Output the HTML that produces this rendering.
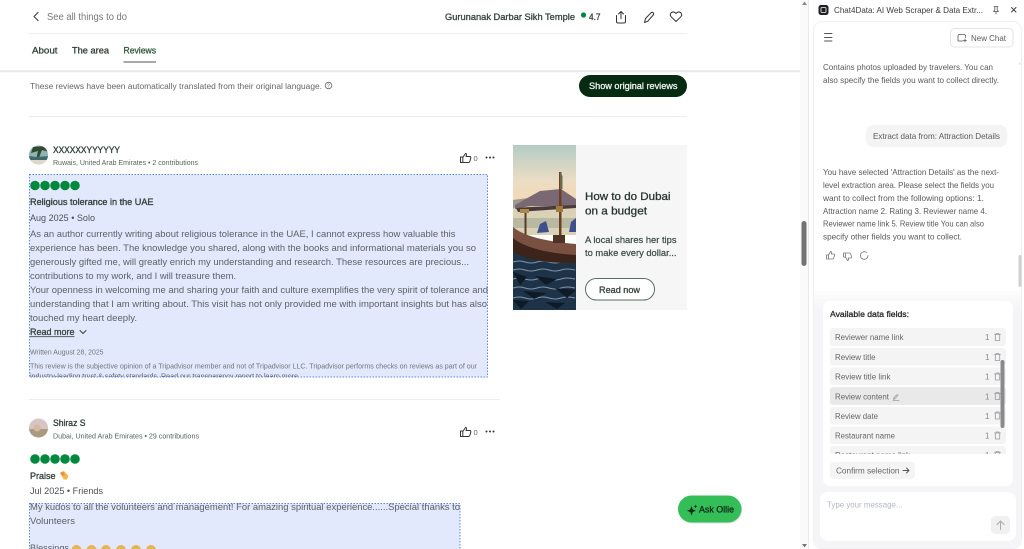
<!DOCTYPE html>
<html lang="en">
<head>
<meta charset="utf-8">
<title>Gurunanak Darbar Sikh Temple</title>
<style>
html,body{margin:0;padding:0;width:1024px;height:549px;overflow:hidden;background:#fff}
svg{display:block;position:absolute;left:0;top:0;filter:blur(.38px)}
text{font-family:"Liberation Sans",sans-serif;white-space:pre}
.b{font-weight:400;stroke:#36443c;stroke-width:.32}
.w{font-weight:400;stroke:#eef2ee;stroke-width:.3}
.body{font-size:9.5px;fill:#5c6068}
.chat{font-size:8.5px;fill:#5a5a5e}
.row{font-size:8px;fill:#66666a}
.ic{fill:none;stroke:#333;stroke-width:1;stroke-linecap:round;stroke-linejoin:round}
.ig{fill:none;stroke:#9a9a9e;stroke-width:.8;stroke-linecap:round;stroke-linejoin:round}
</style>
</head>
<body>
<svg width="1024" height="549" viewBox="0 0 1024 549" xmlns="http://www.w3.org/2000/svg">
<defs>
<linearGradient id="sky" x1="0" y1="0" x2="0" y2="1">
<stop offset="0" stop-color="#b4ccc6"/><stop offset=".5" stop-color="#ecdcc4"/><stop offset="1" stop-color="#f8d6a8"/>
</linearGradient>
<linearGradient id="fade" x1="0" y1="0" x2="0" y2="1">
<stop offset="0" stop-color="#fff"/><stop offset="1" stop-color="#f5f5f8"/>
</linearGradient>
<clipPath id="c1"><rect x="0" y="0" width="1024" height="377"/></clipPath>
<clipPath id="c2"><rect x="825" y="320" width="185" height="134"/></clipPath>
<clipPath id="c3"><rect x="513" y="145" width="63" height="165"/></clipPath>
<clipPath id="a1"><circle cx="38.5" cy="155" r="9.5"/></clipPath>
<clipPath id="a2"><circle cx="38.5" cy="428" r="9.5"/></clipPath>
</defs>

<!-- top bar -->
<path class="ic" style="stroke:#444;stroke-width:1.2" d="M38 12.5L34 16.5L38 20.5"/>
<text x="47" y="20" font-size="10" fill="#777" textLength="80" lengthAdjust="spacingAndGlyphs">See all things to do</text>
<text x="445" y="20" font-size="9.5" class="b" fill="#3a4a42" textLength="130" lengthAdjust="spacingAndGlyphs">Gurunanak Darbar Sikh Temple</text>
<circle cx="583.5" cy="15" r="2.6" fill="#00893c"/>
<text x="589" y="20" font-size="9.5" class="b" fill="#3a4a42" textLength="11.5" lengthAdjust="spacingAndGlyphs">4.7</text>
<path class="ic" d="M616.5 15.5V21.5Q616.5 23 618 23H624Q625.5 23 625.5 21.5V15.5M621 18.5V11.5M618.5 14L621 11.5L623.5 14"/>
<path class="ic" d="M644.5 22.5L645.5 18.5L651 12.8Q652.2 11.8 653.2 12.8Q654.2 13.8 653.2 15L647.7 21.3Z"/>
<path class="ic" d="M676 21.5L671.2 16.8Q669.5 14.8 671 12.9Q673 11 675.2 12.8L676 13.5L676.8 12.8Q679 11 681 12.9Q682.5 14.8 680.8 16.8Z"/>
<line x1="29" y1="33.5" x2="687" y2="33.5" stroke="#f0f0f0"/>

<!-- tabs -->
<text x="32" y="53.5" font-size="9.5" class="b" fill="#2f4034" textLength="25.5" lengthAdjust="spacingAndGlyphs">About</text>
<text x="72" y="53.5" font-size="9.5" class="b" fill="#2f4034" textLength="37" lengthAdjust="spacingAndGlyphs">The area</text>
<text x="123.5" y="53.5" font-size="9.5" class="b" fill="#2f5a3c" style="stroke:#2f5a3c" textLength="32.5" lengthAdjust="spacingAndGlyphs">Reviews</text>
<rect x="123.5" y="61.5" width="32.5" height="1" fill="#555"/>
<rect x="0" y="70.5" width="800" height="1" fill="#dcdcdc"/>
<rect x="0" y="71.5" width="800" height="1" fill="#f3f3f3"/>

<text x="30" y="89" font-size="8.7" fill="#666" textLength="292" lengthAdjust="spacingAndGlyphs">These reviews have been automatically translated from their original language.</text>
<circle cx="328.5" cy="85.5" r="3.3" fill="none" stroke="#666" stroke-width=".8"/>
<text x="326.9" y="87.5" font-size="5.5" fill="#666">?</text>
<rect x="579" y="75" width="108" height="22" rx="11" fill="#062b12"/>
<text x="589" y="89" font-size="9" class="w" fill="#eef2ee" textLength="88.5" lengthAdjust="spacingAndGlyphs">Show original reviews</text>
<line x1="29" y1="116.5" x2="687" y2="116.5" stroke="#eee"/>

<!-- review 1 header -->
<g clip-path="url(#a1)">
<rect x="29" y="145" width="20" height="20" fill="#8fb2b8"/>
<path d="M33 147L46 146L49 152L42 150L38 160L36 160L38 151L31 153Z" fill="#2f4a2c"/>
<path d="M29 156L36 157L49 156V160H29Z" fill="#3f6a6a"/>
<rect x="29" y="160" width="20" height="5" fill="#ded8cc"/>
</g>
<text x="53" y="153" font-size="9" class="b" fill="#2a3530" textLength="67" lengthAdjust="spacingAndGlyphs">XXXXXXYYYYYY</text>
<text x="53" y="165" font-size="7.2" fill="#55665c" textLength="145" lengthAdjust="spacingAndGlyphs">Ruwais, United Arab Emirates • 2 contributions</text>
<path class="ic" d="M460.5 157H462.8V162.5H460.5ZM462.8 157.5L465.5 153.5Q466.8 153.5 466.5 155L466 156.5H470Q471 156.8 470.8 158L469.8 161.5Q469.5 162.5 468.500 162.5H462.8"/>
<text x="473.5" y="161" font-size="7.5" fill="#666">0</text>
<circle cx="486.5" cy="157.5" r="1" fill="#333"/><circle cx="490" cy="157.5" r="1" fill="#333"/><circle cx="493.5" cy="157.5" r="1" fill="#333"/>

<!-- selection 1 -->
<rect x="29.5" y="174.5" width="458" height="202.5" fill="#e3e9fc" stroke="#5b87e8" stroke-width="1" stroke-dasharray="1.5 1.5"/>
<g fill="#00893c"><circle cx="35" cy="185.5" r="4.8"/><circle cx="45" cy="185.500" r="4.8"/><circle cx="55" cy="185.5" r="4.8"/><circle cx="65" cy="185.5" r="4.8"/><circle cx="75" cy="185.5" r="4.8"/></g>
<text x="30" y="205" font-size="9" class="b" fill="#303a3a" textLength="123.5" lengthAdjust="spacingAndGlyphs">Religious tolerance in the UAE</text>
<text x="30" y="221" font-size="9.5" fill="#4c5158" textLength="65" lengthAdjust="spacingAndGlyphs">Aug 2025 • Solo</text>
<text class="body" x="30" y="237" textLength="425.5" lengthAdjust="spacingAndGlyphs">As an author currently writing about religious tolerance in the UAE, I cannot express how valuable this</text>
<text class="body" x="30" y="251" textLength="446" lengthAdjust="spacingAndGlyphs">experience has been. The knowledge you shared, along with the books and informational materials you so</text>
<text class="body" x="30" y="265" textLength="439" lengthAdjust="spacingAndGlyphs">generously gifted me, will greatly enrich my understanding and research. These resources are precious...</text>
<text class="body" x="30" y="279" textLength="206" lengthAdjust="spacingAndGlyphs">contributions to my work, and I will treasure them.</text>
<text class="body" x="30" y="293" textLength="458" lengthAdjust="spacingAndGlyphs">Your openness in welcoming me and sharing your faith and culture exemplifies the very spirit of tolerance and</text>
<text class="body" x="30" y="307" textLength="457" lengthAdjust="spacingAndGlyphs">understanding that I am writing about. This visit has not only provided me with important insights but has also</text>
<text class="body" x="30" y="321" textLength="107" lengthAdjust="spacingAndGlyphs">touched my heart deeply.</text>
<text x="30" y="335" font-size="9.5" class="b" fill="#33403a" textLength="44.5" lengthAdjust="spacingAndGlyphs">Read more</text>
<rect x="30" y="336.3" width="44.5" height=".8" fill="#33403a"/>
<path class="ic" style="stroke:#33403a" d="M80 330.500L83 333.500L86 330.500"/>
<text x="30" y="354.5" font-size="7.2" fill="#70747c" textLength="73.5" lengthAdjust="spacingAndGlyphs">Written August 28, 2025</text>
<text x="30" y="368.5" font-size="7.2" fill="#70747c" textLength="447" lengthAdjust="spacingAndGlyphs">This review is the subjective opinion of a Tripadvisor member and not of Tripadvisor LLC. Tripadvisor performs checks on reviews as part of our</text>
<g clip-path="url(#c1)">
<text x="30" y="378.5" font-size="7.2" fill="#60646c" textLength="270" lengthAdjust="spacingAndGlyphs">industry-leading trust &amp; safety standards. Read our transparency report to learn more.</text>
</g>
<line x1="29" y1="399.5" x2="500" y2="399.5" stroke="#eee"/>

<!-- ad -->
<rect x="576" y="145" width="111" height="165" fill="#f6f6f6"/>
<g clip-path="url(#c3)">
<rect x="513" y="145" width="63" height="72" fill="url(#sky)"/>
<rect x="513" y="205" width="63" height="30" fill="#d9d2b6"/>
<rect x="513" y="218" width="63" height="10" fill="#b9b8a0"/>
<path d="M513 200L528 198L540 205L513 208Z" fill="#9a9a8c"/>
<rect x="513" y="250" width="63" height="60" fill="#1e3348"/>
<path d="M513 262q6 -2 12 0t12 0t12 0t12 0t14 0M513 270q6 -2 12 0t12 0t12 0t12 0t14 0M513 279q6 -2 12 0t12 0t12 0t12 0t14 0M513 288q6 -2 12 0t12 0t12 0t12 0t14 0M513 298q6 -2 12 0t12 0t12 0t12 0t14 0" stroke="#7f97ad" stroke-width="1" fill="none"/>
<path d="M513 272l14 5l-7 8zM535 276l22 3l-11 6zM523 291l24 2l-13 6zM555 288l21 2l-9 8zM513 300l16 1l-8 8zM545 302l20 1l-8 6z" fill="#0e1a26"/>
<path d="M515 205L540 191L561 189L576 199V206L530 206L515 209Z" fill="#7a6872"/>
<path d="M516 208L530 207L576 205V208L518 212Z" fill="#4a3a3a"/>
<rect x="524.5" y="209" width="2" height="27" fill="#5a3d28"/>
<rect x="559" y="172" width="2.5" height="72" fill="#6a3f26"/>
<path d="M560 172L562.500 176V189L560 189Z" fill="#6b6a4a"/>
<rect x="520" y="209" width="9" height="4" fill="#a98a48"/>
<rect x="556" y="206" width="7" height="6" fill="#a07a3a"/>
<path d="M540 224L546 221L549 232L537 233Z" fill="#3f4f8e"/>
<path d="M571 222L576 218V232L569 232Z" fill="#3f4f8e"/>
<path d="M513 227Q528 240 576 244V258Q535 256 513 241Z" fill="#7a5140"/>
<path d="M513 238Q530 252 576 255V263Q535 264 513 252Z" fill="#3d241a"/>
<rect x="553" y="235" width="12" height="8" fill="#4e3224"/>
</g>
<text x="585" y="200" font-size="11" class="b" fill="#1f2f28" textLength="85.5" lengthAdjust="spacingAndGlyphs">How to do Dubai</text>
<text x="585" y="214.5" font-size="11" class="b" fill="#1f2f28" textLength="62" lengthAdjust="spacingAndGlyphs">on a budget</text>
<text x="585" y="243" font-size="9" fill="#3a4a42" style="stroke:#3a4a42;stroke-width:.2" textLength="91.5" lengthAdjust="spacingAndGlyphs">A local shares her tips</text>
<text x="585" y="256" font-size="9" fill="#3a4a42" style="stroke:#3a4a42;stroke-width:.2" textLength="91.5" lengthAdjust="spacingAndGlyphs">to make every dollar...</text>
<rect x="585.5" y="278.5" width="69" height="21.5" rx="10.7" fill="#fff" stroke="#5a6b60"/>
<text x="599" y="293" font-size="9" class="b" fill="#3a4a42" textLength="41" lengthAdjust="spacingAndGlyphs">Read now</text>

<!-- review 2 -->
<g clip-path="url(#a2)">
<rect x="29" y="418" width="20" height="20" fill="#d8c4c4"/>
<rect x="29" y="429" width="20" height="9" fill="#a99a80"/>
<circle cx="37" cy="428" r="3.500" fill="#d9b8a0"/>
</g>
<text x="53" y="426" font-size="9" class="b" fill="#303a36" textLength="32.5" lengthAdjust="spacingAndGlyphs">Shiraz S</text>
<text x="53" y="438.5" font-size="7.2" fill="#55665c" textLength="146" lengthAdjust="spacingAndGlyphs">Dubai, United Arab Emirates • 29 contributions</text>
<path class="ic" d="M460.500 431H462.8V436.5H460.5ZM462.8 431.5L465.5 427.5Q466.8 427.5 466.5 429L466 430.5H470Q471 430.8 470.8 432L469.8 435.5Q469.5 436.5 468.5 436.5H462.8"/>
<text x="473.5" y="435" font-size="7.5" fill="#666">0</text>
<circle cx="486.5" cy="431.5" r="1" fill="#333"/><circle cx="490" cy="431.5" r="1" fill="#333"/><circle cx="493.5" cy="431.5" r="1" fill="#333"/>
<g fill="#00893c"><circle cx="35" cy="459" r="4.8"/><circle cx="45" cy="459" r="4.8"/><circle cx="55" cy="459" r="4.8"/><circle cx="65" cy="459" r="4.8"/><circle cx="75" cy="459" r="4.8"/></g>
<text x="30" y="479" font-size="9" class="b" fill="#303a36" textLength="25.5" lengthAdjust="spacingAndGlyphs">Praise</text>
<path d="M60.5 472.5L64 471L68.5 476L67 479.5L63.5 479.5Z" fill="#f2b84e"/>
<path d="M60 473L63 471.5L65 475L62 476Z" fill="#ee8a3c"/>
<text x="30" y="494" font-size="9.5" fill="#4c5158" textLength="73" lengthAdjust="spacingAndGlyphs">Jul 2025 • Friends</text>
<rect x="29.5" y="503.5" width="430.5" height="50" fill="#e3e9fc" stroke="#5b87e8" stroke-width="1" stroke-dasharray="1.5 1.5"/>
<text class="body" x="30" y="510" textLength="430" lengthAdjust="spacingAndGlyphs">My kudos to all the volunteers and management! For amazing spiritual experience......Special thanks to</text>
<text class="body" x="30" y="524" textLength="45" lengthAdjust="spacingAndGlyphs">Volunteers</text>
<text class="body" x="30" y="551" textLength="39" lengthAdjust="spacingAndGlyphs">Blessings</text>
<g fill="#e8b452"><circle cx="76.5" cy="550" r="5"/><circle cx="91.5" cy="550" r="5"/><circle cx="106" cy="550" r="5"/><circle cx="121" cy="550" r="5"/><circle cx="136" cy="550" r="5"/><circle cx="151" cy="550" r="5"/></g>

<!-- Ask Ollie -->
<rect x="678.5" y="496.5" width="63.5" height="27" rx="13.5" fill="#000" opacity=".12"/>
<rect x="678" y="495.5" width="63.5" height="27" rx="13.5" fill="#34be58"/>
<path d="M691.5 506L692.8 509.5L696 510.8L692.8 512L691.5 515.5L690.2 512L687 510.8L690.2 509.5ZM695.5 504.5L696 506L697.5 506.5L696 507L695.5 508.5L695 507L693.5 506.5L695 506Z" fill="#0c2a18"/>
<text x="699" y="512.5" font-size="9.5" fill="#0c2a18" style="stroke:#0c2a18;stroke-width:.3" textLength="35" lengthAdjust="spacingAndGlyphs">Ask Ollie</text>

<!-- page scrollbar -->
<rect x="800" y="0" width="9" height="549" fill="#fafafa"/>
<path d="M804.5 1.5L807 5H802Z" fill="#888"/>
<path d="M804.5 547.5L807 544H802Z" fill="#777"/>
<rect x="801.5" y="221" width="5" height="45" rx="2.5" fill="#747474"/>
<line x1="808.5" y1="0" x2="808.5" y2="549" stroke="#eaeaea"/>

<!-- side panel header -->
<rect x="809" y="0" width="215" height="549" fill="#fff"/>
<rect x="818.5" y="5" width="10" height="10" rx="2.5" fill="#1e1e22"/>
<rect x="821" y="7.5" width="5" height="5" rx="1" fill="none" stroke="#fff" stroke-width=".8"/>
<text x="834" y="13" font-size="8.7" fill="#3c3c40" textLength="149" lengthAdjust="spacingAndGlyphs">Chat4Data: AI Web Scraper &amp; Data Extr...</text>
<path class="ig" style="stroke:#555" d="M994 6.5H998M994.8 6.5V10L993.5 11.5H998.5L997.2 10V6.5M996 11.5V14"/>
<path class="ig" style="stroke:#444;stroke-width:1" d="M1011.5 7.5L1016 12M1016 7.5L1011.5 12"/>

<!-- side panel card -->
<rect x="813.5" y="21.5" width="208" height="527" rx="9" fill="#fff" stroke="#f0f0f2"/>
<path class="ig" style="stroke:#555;stroke-width:.9" d="M824.5 33.5H832M824.5 37.5H832M824.5 41H832"/>
<rect x="950.5" y="28.5" width="62.5" height="18.5" rx="4" fill="#fff" stroke="#e4e4e6"/>
<path class="ig" style="stroke:#555" d="M958 41V36Q958 34.5 959.5 34.5H964Q965.5 34.5 965.5 36V37.5M958 41H963M965 39V42M963.5 40.5H966.5"/>
<text x="971" y="40.8" font-size="8.5" fill="#5a5a5e" textLength="35" lengthAdjust="spacingAndGlyphs">New Chat</text>

<text class="chat" x="823" y="70" textLength="170" lengthAdjust="spacingAndGlyphs">Contains photos uploaded by travelers. You can</text>
<text class="chat" x="823" y="83" textLength="176" lengthAdjust="spacingAndGlyphs">also specify the fields you want to collect directly.</text>

<rect x="866" y="125" width="141" height="22" rx="7" fill="#f4f4f5"/>
<text class="chat" x="873" y="139" textLength="127" lengthAdjust="spacingAndGlyphs">Extract data from: Attraction Details</text>

<text class="chat" x="823" y="175" textLength="176" lengthAdjust="spacingAndGlyphs">You have selected 'Attraction Details' as the next-</text>
<text class="chat" x="823" y="188" textLength="171" lengthAdjust="spacingAndGlyphs">level extraction area. Please select the fields you</text>
<text class="chat" x="823" y="201" textLength="161" lengthAdjust="spacingAndGlyphs">want to collect from the following options: 1.</text>
<text class="chat" x="823" y="214" textLength="164" lengthAdjust="spacingAndGlyphs">Attraction name 2. Rating 3. Reviewer name 4.</text>
<text class="chat" x="823" y="226.5" textLength="161" lengthAdjust="spacingAndGlyphs">Reviewer name link 5. Review title You can also</text>
<text class="chat" x="823" y="239.5" textLength="139" lengthAdjust="spacingAndGlyphs">specify other fields you want to collect.</text>

<path class="ig" style="stroke:#777" d="M826.5 255H828.5V259H826.5ZM828.5 255L830.5 251.5Q831.8 251.5 831.5 253L831.2 254H834Q834.8 254.3 834.5 255.3L833.7 258Q833.4 259 832.5 259H828.5"/>
<path class="ig" style="stroke:#777" d="M843.5 253H845.5V257H843.5ZM845.5 257L847.5 260.5Q848.8 260.5 848.5 259L848.2 258H851Q851.8 257.7 851.5 256.7L850.7 254Q850.4 253 849.5 253H845.5"/>
<path class="ig" style="stroke:#777" d="M868 255.5A3.8 3.8 0 1 1 866.5 252.500"/>

<rect x="1018.5" y="255" width="3" height="32" rx="1.5" fill="#d0d0d2"/>
<path d="M1019.8 62L1021.3 64.5H1018.3Z" fill="#e2e2e2"/>
<path d="M1019.8 292L1021.3 289.5H1018.3Z" fill="#e2e2e2"/>

<!-- lower area -->
<rect x="814" y="288" width="207" height="20" fill="url(#fade)"/>
<path d="M814 308H1021V539Q1021 548 1012 548H823Q814 548 814 539Z" fill="#f5f5f8"/>
<rect x="823" y="301" width="190" height="185" rx="7" fill="#fff"/>

<text x="830" y="317" font-size="8.7" fill="#2a2a2e" style="stroke:#2a2a2e;stroke-width:.3" textLength="79" lengthAdjust="spacingAndGlyphs">Available data fields:</text>

<g clip-path="url(#c2)">
<g fill="#f4f4f5">
<rect x="830" y="328" width="176" height="18" rx="3"/>
<rect x="830" y="348" width="176" height="17.5" rx="3"/>
<rect x="830" y="367.5" width="176" height="17.5" rx="3"/>
<rect x="830" y="387" width="176" height="18" fill="#e9e9ea" rx="3"/>
<rect x="830" y="407" width="176" height="17.5" rx="3"/>
<rect x="830" y="426.5" width="176" height="17.5" rx="3"/>
<rect x="830" y="446" width="176" height="18" rx="3"/>
</g>
<text class="row" x="835" y="340" textLength="68.5" lengthAdjust="spacingAndGlyphs">Reviewer name link</text>
<text class="row" x="835" y="360" textLength="40.5" lengthAdjust="spacingAndGlyphs">Review title</text>
<text class="row" x="835" y="379.5" textLength="55.5" lengthAdjust="spacingAndGlyphs">Review title link</text>
<text class="row" x="835" y="399.5" textLength="54" lengthAdjust="spacingAndGlyphs">Review content</text>
<path class="ig" d="M893.5 399.5L894 397.5L897 394.5L898 395.5L895 398.5ZM893 400.5H899"/>
<text class="row" x="835" y="419" textLength="43" lengthAdjust="spacingAndGlyphs">Review date</text>
<text class="row" x="835" y="438.5" textLength="60" lengthAdjust="spacingAndGlyphs">Restaurant name</text>
<text class="row" x="835" y="458" textLength="75" lengthAdjust="spacingAndGlyphs">Restaurant name link</text>
<g font-size="8" fill="#88888c">
<text x="985" y="340">1</text><text x="985" y="360">1</text><text x="985" y="379.5">1</text><text x="985" y="399.5">1</text><text x="985" y="419">1</text><text x="985" y="438.5">1</text><text x="985" y="458">1</text>
</g>
<path class="ig" d="M994.5 334.5H1000.5M996 334.5V333.5H999V334.5M995.3 334.5V340.5H999.7V334.5"/>
<path class="ig" d="M994.5 354.5H1000.5M996 354.5V353.5H999V354.5M995.3 354.5V360.5H999.7V354.5"/>
<path class="ig" d="M994.5 374H1000.5M996 374V373H999V374M995.3 374V380H999.7V374"/>
<path class="ig" d="M994.5 393.5H1000.5M996 393.5V392.5H999V393.5M995.3 393.5V399.5H999.7V393.5"/>
<path class="ig" d="M994.5 413H1000.5M996 413V412H999V413M995.3 413V419H999.7V413"/>
<path class="ig" d="M994.5 433H1000.5M996 433V432H999V433M995.3 433V439H999.7V433"/>
<path class="ig" d="M994.5 452.5H1000.5M996 452.5V451.5H999V452.5M995.3 452.5V458.5H999.7V452.5"/>
</g>
<rect x="1000.5" y="360" width="4" height="68" rx="2" fill="#8a8a8c"/>

<rect x="830" y="462" width="85" height="17" rx="4" fill="#f4f4f5"/>
<text class="row" x="836" y="473.5" textLength="63.5" lengthAdjust="spacingAndGlyphs">Confirm selection</text>
<path class="ig" style="stroke:#555;stroke-width:.9" d="M903 470.5H909M906.5 468L909 470.5L906.5 473"/>

<rect x="820" y="492" width="196" height="49" rx="8" fill="#fff"/>
<text x="827" y="507.5" font-size="8.5" fill="#b4b8c8" textLength="75.5" lengthAdjust="spacingAndGlyphs">Type your message...</text>
<rect x="991" y="516" width="19" height="18" rx="4.5" fill="#f0f0f1"/>
<path class="ig" style="stroke:#aaa;stroke-width:1" d="M1000.5 529.5V521M997 524.5L1000.5 521L1004 524.5"/>
</svg>
</body>
</html>
